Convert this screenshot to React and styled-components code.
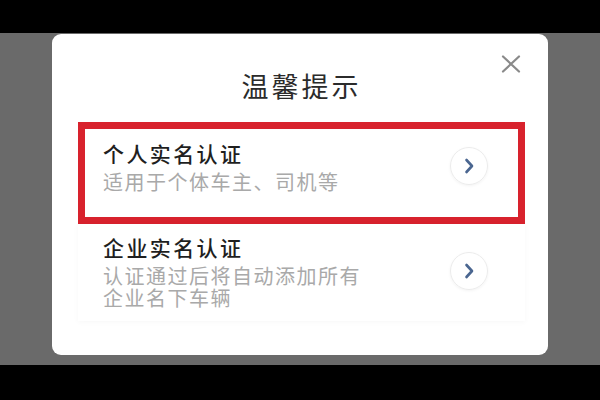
import React from "react";
import styled, { createGlobalStyle } from "styled-components";

const Global = createGlobalStyle`
  html, body { margin: 0; padding: 0; background: #000; }
  body { font-family: "Noto Sans CJK SC", "Noto Sans", sans-serif; }
`;

const Screen = styled.div`
  width: 600px;
  height: 400px;
  display: flex;
  flex-direction: column;
  background: #000;
  overflow: hidden;
`;

const Bar = styled.div`
  height: ${(p) => p.$h}px;
  flex: none;
  background: #000;
`;

const Stage = styled.div`
  flex: 1;
  background: #6a6a6a;
  padding: 1px 52px 10px;
  display: flex;
`;

const Modal = styled.div`
  flex: 1;
  background: #fff;
  border-radius: 9px;
  padding: 0 23px 0 26px;
  display: flex;
  flex-direction: column;
`;

const Header = styled.div`
  display: grid;
  grid-template-columns: 1fr auto 1fr;
  align-items: start;
  margin-bottom: 18px;
`;

const Title = styled.h1`
  grid-column: 2;
  margin: 34px 0 0;
  font-size: 27px;
  line-height: 36px;
  font-weight: 400;
  letter-spacing: 3px;
  color: #2b2b2b;
`;

const Close = styled.button`
  grid-column: 3;
  justify-self: end;
  margin: 20px 2px 0 0;
  width: 24px;
  height: 20px;
  padding: 0;
  border: none;
  background: none;
  display: flex;
  align-items: center;
  justify-content: center;
`;

const Option = styled.div`
  display: flex;
  align-items: center;
  justify-content: space-between;
  border: ${(p) => (p.$highlight ? "7px solid #d8222d" : "none")};
  padding: ${(p) => (p.$highlight ? "10px 30px 24px 18px" : "9px 37px 12px 25px")};
  box-shadow: ${(p) => (p.$highlight ? "none" : "0 1px 6px rgba(0,0,0,0.035)")};
`;

const TextBlock = styled.div`
  display: flex;
  flex-direction: column;
`;

const OptionTitle = styled.div`
  font-size: 21px;
  line-height: 28px;
  font-weight: 500;
  letter-spacing: 2.4px;
  color: #1f1f1f;
`;

const OptionDesc = styled.div`
  margin-top: 4px;
  max-width: 272px;
  font-size: 20px;
  line-height: 22px;
  letter-spacing: 1.5px;
  color: #a9a9a9;
`;

const Arrow = styled.div`
  width: 38px;
  height: 38px;
  flex: none;
  border-radius: 50%;
  border: 1px solid #ececec;
  box-shadow: 0 1px 3px rgba(0, 0, 0, 0.05);
  display: flex;
  align-items: center;
  justify-content: center;
  box-sizing: border-box;
`;

const Chevron = () => (
  <svg width="12" height="16" viewBox="0 0 12 16">
    <path d="M3.5 2 L9 8 L3.5 14" fill="none" stroke="#4a6690" strokeWidth="2.6" strokeLinecap="round" strokeLinejoin="round" />
  </svg>
);

const options = [
  { title: "个人实名认证", desc: "适用于个体车主、司机等", highlight: true },
  { title: "企业实名认证", desc: "认证通过后将自动添加所有企业名下车辆", highlight: false },
];

export default function App() {
  return (
    <>
      <Global />
      <Screen>
        <Bar $h={33} />
        <Stage>
          <Modal>
            <Header>
              <Title>温馨提示</Title>
              <Close aria-label="关闭">
                <svg width="22" height="18" viewBox="0 0 22 18">
                  <path d="M3 1.5 L19 16.5 M19 1.5 L3 16.5" stroke="#8a8a8a" strokeWidth="2.2" strokeLinecap="round" />
                </svg>
              </Close>
            </Header>
            {options.map((o) => (
              <Option key={o.title} $highlight={o.highlight}>
                <TextBlock>
                  <OptionTitle>{o.title}</OptionTitle>
                  <OptionDesc>{o.desc}</OptionDesc>
                </TextBlock>
                <Arrow>
                  <Chevron />
                </Arrow>
              </Option>
            ))}
          </Modal>
        </Stage>
        <Bar $h={35} />
      </Screen>
    </>
  );
}
